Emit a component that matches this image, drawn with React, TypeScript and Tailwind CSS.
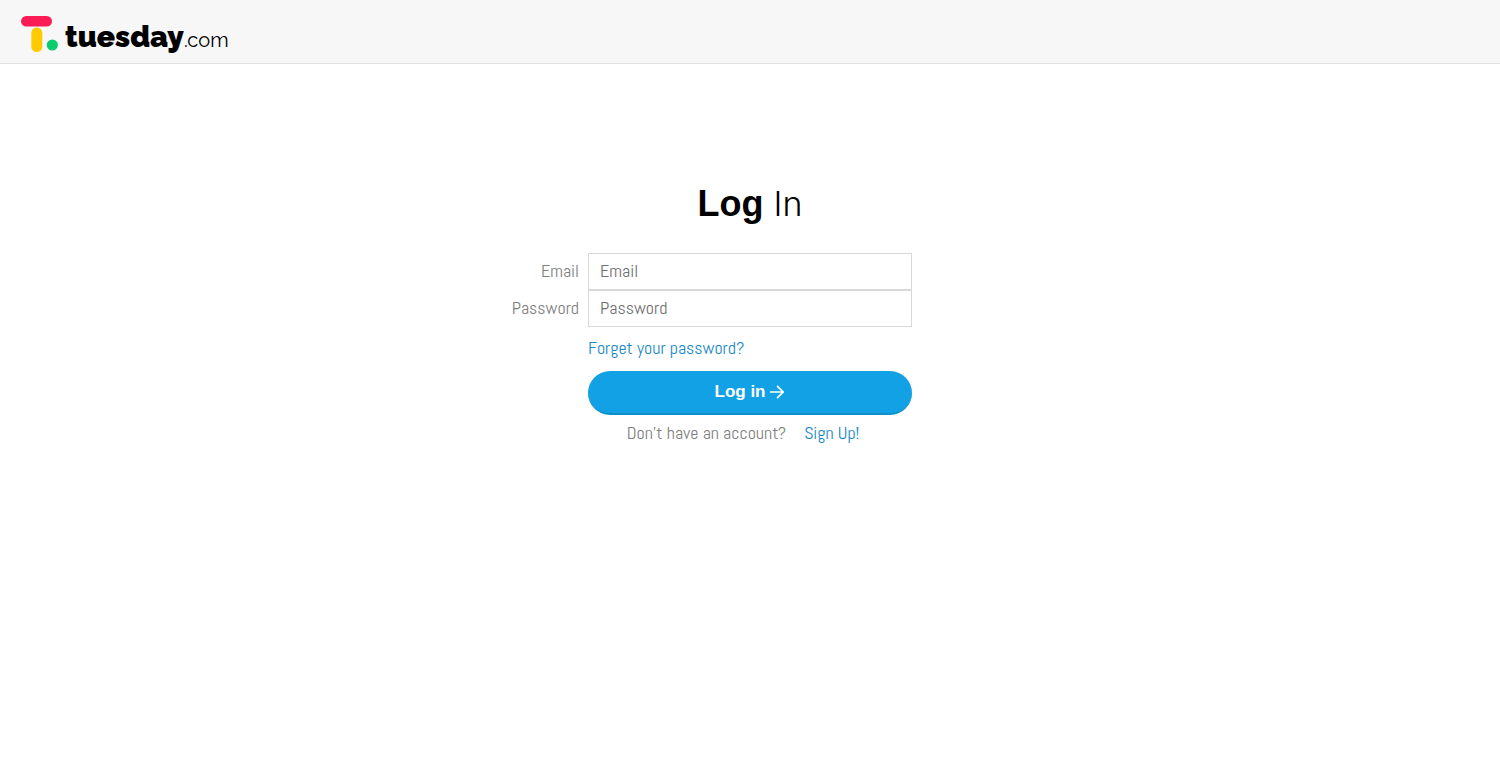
import React from "react";

function Logo() {
  return (
    <a href="#" className="flex items-start gap-[7px] text-black">
      <svg width="37" height="36" viewBox="0 0 37 36" aria-hidden="true">
        <rect x="0" y="0" width="31" height="10.5" rx="5.2" fill="#fb1b55" />
        <rect x="10.3" y="11.5" width="11" height="24.5" rx="5.5" fill="#ffcb00" />
        <circle cx="31.3" cy="29" r="5.6" fill="#0bcd70" />
      </svg>
      <span className="flex items-baseline pt-[3px] font-[Raleway,Lato,sans-serif]">
        <span className="text-[30px] leading-9 font-black">tuesday</span>
        <span className="text-[20px] font-normal">.com</span>
      </span>
    </a>
  );
}

type FieldProps = { id: string; label: string; type: string };

function Field({ id, label, type }: FieldProps) {
  return (
    <div className="relative flex h-[37px]">
      <label
        htmlFor={id}
        className="absolute right-full mr-[9px] flex h-full items-center pb-[2px] text-[#808080]"
      >
        {label}
      </label>
      <input
        id={id}
        type={type}
        placeholder={label}
        className="h-full w-full border border-[#d8d8d8] bg-white px-[11px] pb-[2px] text-[#444] outline-none placeholder:text-[#707070]"
      />
    </div>
  );
}

export default function App() {
  return (
    <div className="min-h-screen bg-white font-[Abel,'Roboto_Condensed','Open_Sans_Condensed','Arial_Narrow',Roboto,sans-serif] text-[18px]">
      <header className="flex h-16 items-start border-b border-[#e1e1e1] bg-[#f7f7f7] px-[21px] pt-4">
        <Logo />
      </header>
      <main className="mx-auto flex w-[324px] max-w-full flex-col pt-[118px]">
        <h1 className="text-center font-['Liberation_Sans',sans-serif] text-[36px] leading-[43px] font-bold text-black">
          Log <span className="font-[Inter,sans-serif] text-[34px] font-light">In</span>
        </h1>
        <form className="pt-7" onSubmit={(e) => e.preventDefault()}>
          <Field id="email" label="Email" type="email" />
          <Field id="password" label="Password" type="password" />
          <a href="#" className="mt-2 block leading-[26px] text-[#1688c8]">
            Forget your password?
          </a>
          <button
            type="submit"
            className="mt-[10px] flex h-11 w-full items-center justify-center gap-1 rounded-full border-b-2 border-[#0f8fca] bg-[#12a1e4] font-['Liberation_Sans',sans-serif] text-[17px] font-bold text-white"
          >
            Log in
            <svg width="16" height="16" viewBox="0 0 16 16" fill="none" stroke="currentColor" strokeWidth="1.7" aria-hidden="true">
              <path d="M1 8h13M8 1.8 14.2 8 8 14.2" />
            </svg>
          </button>
        </form>
        <p className="flex justify-center gap-[18px] pr-[14px] pt-1 leading-7 text-[#808080]">
          Don't have an account?
          <a href="#" className="text-[#1688c8]">
            Sign Up!
          </a>
        </p>
      </main>
    </div>
  );
}
